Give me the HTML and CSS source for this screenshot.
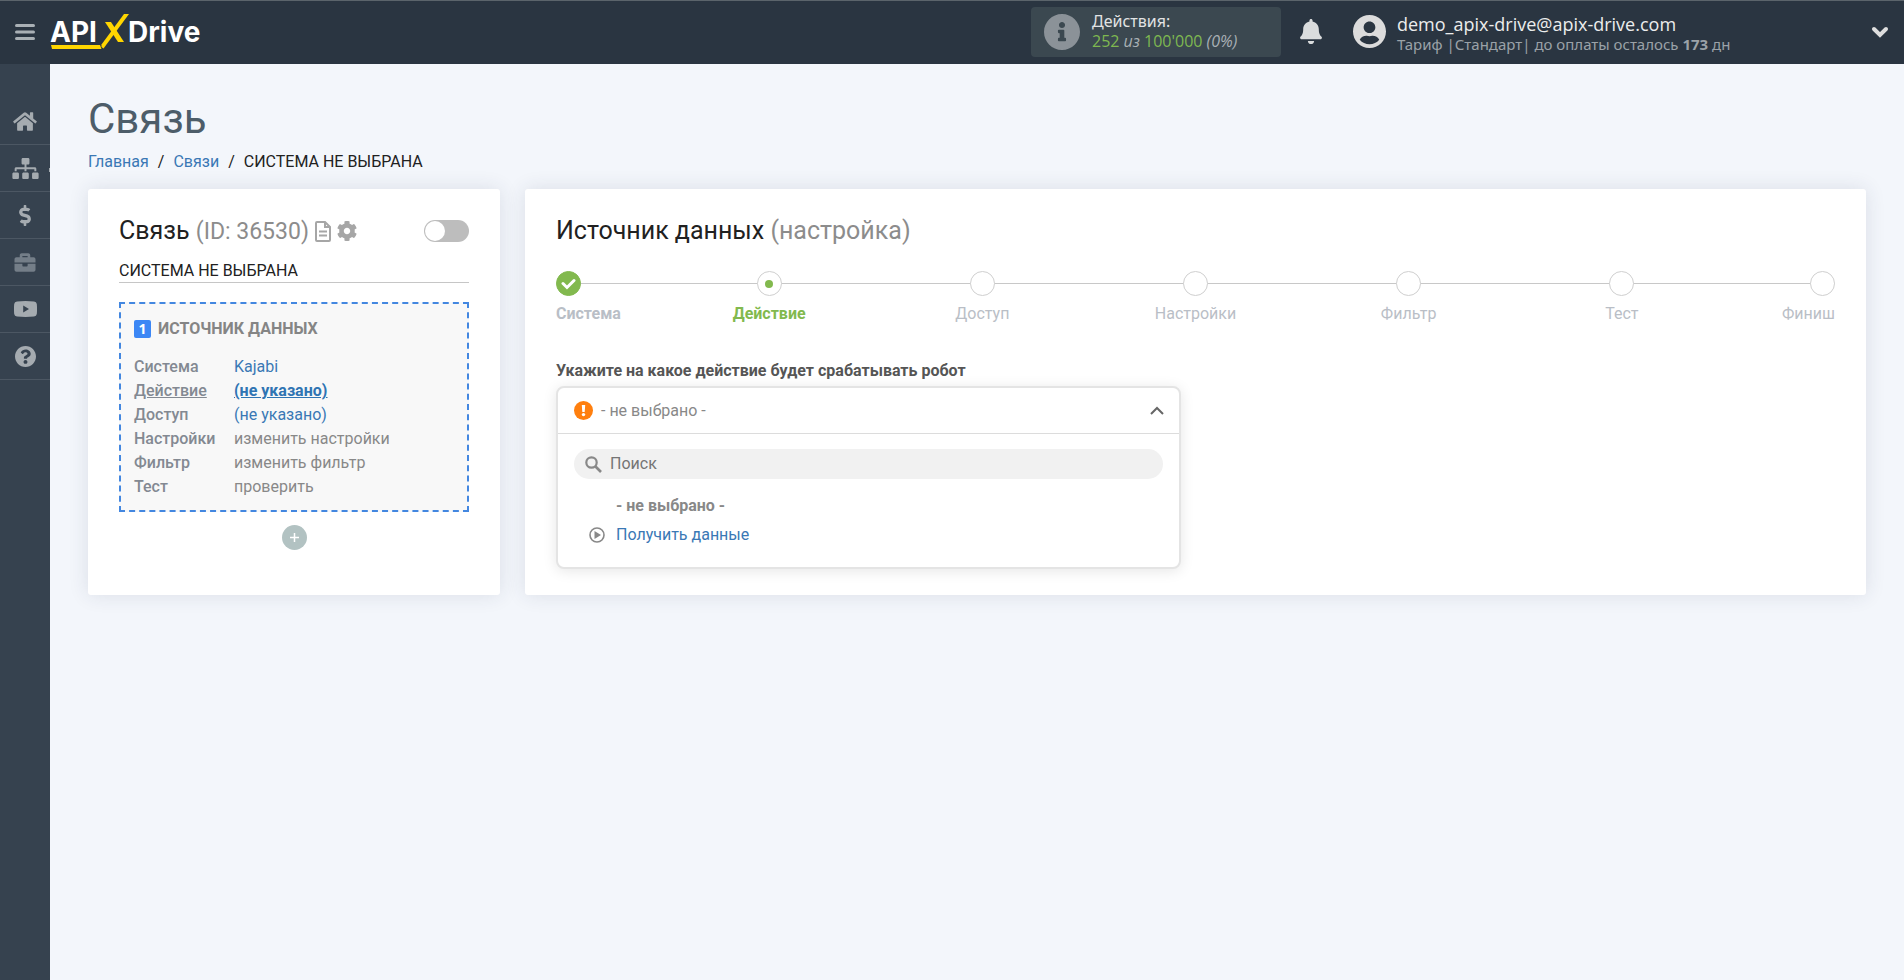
FILE: index.html
```html
<!DOCTYPE html>
<html lang="ru">
<head>
<meta charset="utf-8">
<meta name="viewport" content="width=device-width, initial-scale=1">
<title>Связь</title>
<link rel="stylesheet" href="styles.css">
</head>
<body>
<header class="topbar">
  <button class="icon-button menu-button" type="button" aria-label="Меню">
    <svg width="20" height="18" viewBox="0 0 20 18"><path d="M1.500 2.500h17M1.500 9h17M1.500 15.500h17" stroke="#a9b0b5" stroke-width="3" stroke-linecap="round"/></svg>
  </button>
  <a class="logo" href="#" aria-label="APIXDrive">
    <span class="logo-api">API</span>
    <svg class="logo-x" width="79" height="36" viewBox="0 0 79 36"><path d="M1 31H50L51.500 35H2z" fill="#ffd600"/><path d="M55 8h6l13 20h-6z" fill="#ffd600"/><path d="M74 0h5L53.500 34.500l-2-1.500v-2.500z" fill="#ffd600"/></svg>
    <span class="logo-drive">Drive</span>
  </a>
  <div class="usage">
    <svg class="usage-icon" width="36" height="36" viewBox="8 8 496 496"><path d="M256 8C119.043 8 8 119.083 8 256c0 136.997 111.043 248 248 248s248-110.997 248-248C504 119.083 392.957 8 256 8zm0 110c23.196 0 42 18.804 42 42s-18.804 42-42 42-42-18.804-42-42 18.804-42 42-42zm56 254c0 6.627-5.373 12-12 12h-88c-6.627 0-12-5.373-12-12v-24c0-6.627 5.373-12 12-12h12v-64h-12c-6.627 0-12-5.373-12-12v-24c0-6.627 5.373-12 12-12h64c6.627 0 12 5.373 12 12v100h12c6.627 0 12 5.373 12 12v24z" fill="#8b9298"/></svg>
    <div class="usage-text">
      <div>Действия:</div>
      <div class="usage-count"><span class="green">252</span> <i>из</i> <span class="green">100'000</span> <i>(0%)</i></div>
    </div>
  </div>
  <button class="icon-button bell" type="button" aria-label="Уведомления">
    <svg width="22" height="25" viewBox="0 0 448 512"><path d="M224 512c35.320 0 63.970-28.650 63.970-64H160.030c0 35.350 28.650 64 63.970 64zm215.390-149.710c-19.320-20.760-55.470-51.990-55.470-154.290 0-77.700-54.480-139.900-127.940-155.160V32c0-17.670-14.320-32-31.980-32s-31.980 14.330-31.980 32v20.840C118.560 68.100 64.080 130.300 64.080 208c0 102.300-36.150 133.530-55.470 154.290-6 6.450-8.660 14.160-8.610 21.710.11 16.400 12.980 32 32.100 32h383.800c19.120 0 32-15.600 32.100-32 .05-7.550-2.610-15.270-8.610-21.710z" fill="#dadcdd"/></svg>
  </button>
  <button class="account" type="button">
    <svg class="avatar" width="33" height="33" viewBox="0 8 496 496"><path d="M248 8C111 8 0 119 0 256s111 248 248 248 248-111 248-248S385 8 248 8zm0 96c48.600 0 88 39.400 88 88s-39.400 88-88 88-88-39.400-88-88 39.400-88 88-88zm0 344c-58.700 0-111.300-26.600-146.500-68.200 18.800-35.400 55.600-59.800 98.500-59.800 2.400 0 4.800.4 7.100 1.100 13 4.200 26.600 6.900 40.900 6.900 14.300 0 28-2.700 40.900-6.900 2.300-.7 4.700-1.100 7.100-1.100 42.900 0 79.700 24.400 98.500 59.800C359.300 421.400 306.700 448 248 448z" fill="#dcdcdc"/></svg>
    <span class="account-text">
      <span class="account-mail">demo_apix-drive@apix-drive.com</span>
      <span class="account-plan">Тариф |Стандарт| до оплаты осталось <b>173</b> дн</span>
    </span>
    <svg class="account-caret" width="18" height="12" viewBox="0 0 18 12"><path d="M3 3l6 6 6-6" fill="none" stroke="#dedede" stroke-width="4" stroke-linecap="round"/></svg>
  </button>
</header>

<div class="shell">
  <nav class="sidebar" aria-label="Разделы">
    <a class="side-link" href="#" aria-label="Главная"><svg width="24" height="21" viewBox="0 0 576 512"><path d="M280.370 148.260L96 300.110V464a16 16 0 0 0 16 16l112.060-.29a16 16 0 0 0 15.920-16V368a16 16 0 0 1 16-16h64a16 16 0 0 1 16 16v95.640a16 16 0 0 0 16 16.050L464 480a16 16 0 0 0 16-16V300L295.670 148.260a12.190 12.190 0 0 0-15.300 0zM571.600 251.470L488 182.560V44.050a12 12 0 0 0-12-12h-56a12 12 0 0 0-12 12v72.610L318.470 43a48 48 0 0 0-61 0L4.340 251.470a12 12 0 0 0-1.600 16.900l25.500 31A12 12 0 0 0 45.150 301l235.220-193.740a12.190 12.190 0 0 1 15.300 0L530.900 301a12 12 0 0 0 16.900-1.600l25.500-31a12 12 0 0 0-1.700-16.930z"/></svg></a>
    <a class="side-link side-current" href="#" aria-label="Связи"><svg width="27" height="21" viewBox="0 0 640 512"><path d="M128 352H32c-17.670 0-32 14.330-32 32v96c0 17.670 14.330 32 32 32h96c17.670 0 32-14.330 32-32v-96c0-17.670-14.330-32-32-32zm-24-80h192v48h48v-48h192v48h48v-57.590c0-21.170-17.230-38.410-38.410-38.410H344v-64h40c17.670 0 32-14.330 32-32V32c0-17.670-14.330-32-32-32H256c-17.670 0-32 14.330-32 32v96c0 17.670 14.330 32 32 32h40v64H94.410C73.230 224 56 241.230 56 262.410V320h48v-48zm264 80h-96c-17.670 0-32 14.330-32 32v96c0 17.670 14.330 32 32 32h96c17.670 0 32-14.330 32-32v-96c0-17.670-14.330-32-32-32zm240 0h-96c-17.670 0-32 14.330-32 32v96c0 17.670 14.330 32 32 32h96c17.670 0 32-14.330 32-32v-96c0-17.670-14.330-32-32-32z"/></svg></a>
    <a class="side-link" href="#" aria-label="Оплата"><svg width="12" height="21" viewBox="0 0 288 512"><path d="M209.200 233.400l-108-31.600C88.700 198.200 80 186.500 80 173.500c0-16.300 13.200-29.500 29.500-29.500h66.300c12.200 0 24.200 3.700 34.200 10.500 6.100 4.100 14.300 3.100 19.500-2l34.800-34c7.100-6.900 6.100-18.400-1.800-24.500C238 74.800 207.400 64.100 176 64V16c0-8.800-7.200-16-16-16h-32c-8.800 0-16 7.200-16 16v48h-2.500C45.800 64-5.400 118.700.5 183.600c4.200 46.100 39.400 83.600 83.800 96.600l102.500 30c12.500 3.700 21.200 15.300 21.200 28.300 0 16.300-13.200 29.500-29.500 29.500h-66.300C100 368 88 364.300 78 357.500c-6.100-4.100-14.300-3.100-19.500 2l-34.800 34c-7.100 6.900-6.100 18.400 1.800 24.500 24.500 19.200 55.100 29.900 86.500 30v48c0 8.800 7.200 16 16 16h32c8.800 0 16-7.200 16-16v-48.200c46.600-.9 90.300-28.600 105.700-72.700 21.500-61.600-14.600-124.800-72.500-141.700z"/></svg></a>
    <a class="side-link side-dim" href="#" aria-label="Проекты"><svg width="22" height="21" viewBox="0 0 512 512"><path d="M320 336c0 8.840-7.160 16-16 16h-96c-8.840 0-16-7.160-16-16v-48H0v144c0 25.600 22.400 48 48 48h416c25.600 0 48-22.400 48-48V288H320v48zm144-208h-80V80c0-25.600-22.400-48-48-48H176c-25.600 0-48 22.400-48 48v48H48c-25.600 0-48 22.400-48 48v80h512v-80c0-25.600-22.400-48-48-48zm-144 0H192V96h128v32z"/></svg></a>
    <a class="side-link" href="#" aria-label="Видео"><svg width="23" height="16" viewBox="0 0 23 16"><path fill-rule="evenodd" d="M3 .4Q11.500-.4 20 .4q2.500.2 2.800 2.600.5 5 0 10-.3 2.400-2.800 2.600-8.500.8-17 0Q.5 15.400.2 13q-.5-5 0-10Q.5.6 3 .4zM9.200 4.600v6.800L15 8z"/></svg></a>
    <a class="side-link" href="#" aria-label="Помощь"><svg width="21" height="21" viewBox="8 8 496 496"><path d="M504 256c0 136.997-111.043 248-248 248S8 392.997 8 256C8 119.083 119.043 8 256 8s248 111.083 248 248zM262.655 90c-54.497 0-89.255 22.957-116.549 63.758-3.536 5.286-2.353 12.415 2.715 16.258l34.699 26.310c5.205 3.947 12.621 3.008 16.665-2.122 17.864-22.658 30.113-35.797 57.303-35.797 20.429 0 45.698 13.148 45.698 32.958 0 14.976-12.363 22.667-32.534 33.976C247.128 238.528 216 254.941 216 296v4c0 6.627 5.373 12 12 12h56c6.627 0 12-5.373 12-12v-1.333c0-28.462 83.186-29.647 83.186-106.667 0-58.002-60.165-102-116.531-102zM256 338c-25.365 0-46 20.635-46 46 0 25.364 20.635 46 46 46s46-20.636 46-46c0-25.365-20.635-46-46-46z"/></svg></a>
  </nav>

  <main class="page">
    <h1 class="page-title">Связь</h1>
    <nav class="crumbs" aria-label="Путь">
      <a href="#">Главная</a><span>/</span><a href="#">Связи</a><span>/</span><span>СИСТЕМА НЕ ВЫБРАНА</span>
    </nav>

    <div class="columns">
      <section class="card">
        <div class="card-head">
          <h2 class="card-title">Связь <span class="muted link-id">(ID: 36530)</span></h2>
          <button class="icon-button" type="button" aria-label="Журнал"><svg width="16" height="21" viewBox="0 0 16 21"><path d="M2 1h8l5 5v13q0 1-1 1H2q-1 0-1-1V2q0-1 1-1zM10 1v5h5" fill="none" stroke="#a6a6a6" stroke-width="2"/><path d="M4 10.500h8M4 14.500h8" stroke="#a6a6a6" stroke-width="2"/></svg></button>
          <button class="icon-button gear" type="button" aria-label="Настройки связи"><svg width="20" height="20" viewBox="8 8 496 496"><path d="M487.400 315.700l-42.600-24.600c4.300-23.200 4.300-47 0-70.200l42.600-24.600c4.900-2.800 7.100-8.600 5.500-14-11.100-35.600-30-67.800-54.700-94.600-3.800-4.100-10-5.100-14.800-2.300L380.800 110c-17.900-15.400-38.500-27.300-60.800-35.100V25.800c0-5.600-3.900-10.500-9.400-11.700-36.700-8.200-74.300-7.800-109.200 0-5.500 1.200-9.400 6.100-9.400 11.700V75c-22.200 7.900-42.800 19.800-60.800 35.100L88.700 85.500c-4.900-2.800-11-1.900-14.800 2.300-24.700 26.700-43.600 58.900-54.700 94.600-1.700 5.400.6 11.200 5.500 14L67.300 221c-4.300 23.200-4.300 47 0 70.200l-42.600 24.600c-4.900 2.800-7.100 8.600-5.500 14 11.100 35.600 30 67.800 54.700 94.600 3.800 4.100 10 5.100 14.800 2.300l42.600-24.600c17.900 15.400 38.500 27.300 60.800 35.100v49.200c0 5.600 3.900 10.500 9.400 11.700 36.700 8.200 74.300 7.800 109.200 0 5.500-1.200 9.400-6.100 9.400-11.700v-49.200c22.200-7.900 42.800-19.800 60.800-35.100l42.600 24.600c4.900 2.800 11 1.900 14.800-2.300 24.700-26.700 43.600-58.900 54.700-94.600 1.500-5.500-.7-11.300-5.600-14.100zM256 336c-44.100 0-80-35.900-80-80s35.900-80 80-80 80 35.900 80 80-35.900 80-80 80z" fill="#a6a6a6"/></svg></button>
          <input class="switch" type="checkbox" role="switch" aria-label="Включить связь">
        </div>
        <div class="link-name">СИСТЕМА НЕ ВЫБРАНА</div>
        <div class="source">
          <h3 class="source-title"><span class="source-number">1</span>ИСТОЧНИК ДАННЫХ</h3>
          <dl class="source-list">
            <dt>Система</dt><dd><a href="#">Kajabi</a></dd>
            <dt class="current">Действие</dt><dd class="current"><a href="#">(не указано)</a></dd>
            <dt>Доступ</dt><dd><a href="#">(не указано)</a></dd>
            <dt>Настройки</dt><dd>изменить настройки</dd>
            <dt>Фильтр</dt><dd>изменить фильтр</dd>
            <dt>Тест</dt><dd>проверить</dd>
          </dl>
        </div>
        <button class="add" type="button" aria-label="Добавить"><svg width="9" height="9" viewBox="0 0 9 9"><path d="M4.500 0v9M0 4.500h9" stroke="#fff" stroke-width="1.500"/></svg></button>
      </section>

      <section class="card">
        <div class="card-head">
          <h2 class="card-title">Источник данных <span class="muted">(настройка)</span></h2>
        </div>
        <ol class="steps">
          <li class="step step-done"><span class="dot"><svg width="15" height="12" viewBox="0 0 15 12"><path d="M2 5.500l4 4 7-7" fill="none" stroke="#fff" stroke-width="3" stroke-linecap="round"/></svg></span>Система</li>
          <li class="step step-active"><span class="dot"></span>Действие</li>
          <li class="step"><span class="dot"></span>Доступ</li>
          <li class="step"><span class="dot"></span>Настройки</li>
          <li class="step"><span class="dot"></span>Фильтр</li>
          <li class="step"><span class="dot"></span>Тест</li>
          <li class="step"><span class="dot"></span>Финиш</li>
        </ol>
        <div class="question" id="question">Укажите на какое действие будет срабатывать робот</div>
        <div class="picker">
          <button class="picker-head" type="button" aria-expanded="true" aria-describedby="question">
            <svg width="19" height="19" viewBox="0 0 19 19"><circle cx="9.500" cy="9.500" r="9.500" fill="#ff7f0e"/><path d="M7.800 4h3.400l-.5 7H8.300z" fill="#fff"/><circle cx="9.500" cy="13.600" r="1.700" fill="#fff"/></svg>
            <span>- не выбрано -</span>
            <svg class="picker-caret" width="14" height="9" viewBox="0 0 14 9"><path d="M1 8l6-6 6 6" fill="none" stroke="#666" stroke-width="2"/></svg>
          </button>
          <div class="picker-body">
            <label class="search">
              <svg width="17" height="17" viewBox="0 0 17 17"><circle cx="6.500" cy="6.500" r="5.200" fill="none" stroke="#888" stroke-width="2.200"/><path d="M10.500 10.500l5.500 5.500" stroke="#888" stroke-width="2.600"/></svg>
              <input type="text" placeholder="Поиск" aria-label="Поиск">
            </label>
            <ul class="options">
              <li><button class="option option-none" type="button">- не выбрано -</button></li>
              <li><button class="option" type="button"><svg width="16" height="16" viewBox="0 0 16 16"><circle cx="8" cy="8" r="7" fill="none" stroke="#888" stroke-width="1.600"/><path d="M5.500 4l6.500 4-6.500 4z" fill="#888"/></svg>Получить данные</button></li>
            </ul>
          </div>
        </div>
      </section>
    </div>
  </main>
</div>
</body>
</html>
```

FILE: styles.css
```css
* { box-sizing: border-box; }

body {
  margin: 0;
  min-height: 100vh;
  display: flex;
  flex-direction: column;
  background: #f3f6fb;
  color: #212121;
  font: 16px/24px Roboto, "Noto Sans", sans-serif;
}

a { color: #3a78b5; text-decoration: none; }
button { font: inherit; color: inherit; background: none; border: 0; padding: 0; cursor: pointer; }
h1, h2, h3, dl, dd, ol, ul { margin: 0; padding: 0; font-weight: 400; }
ol, ul { list-style: none; }
svg { display: block; flex: none; }

/* Top bar */
.topbar {
  height: 64px;
  padding-bottom: 2px;
  display: flex;
  align-items: center;
  background: #2a3541;
  border-top: 1px solid #5b646b;
  font-family: "Noto Sans", "Open Sans", sans-serif;
}
.icon-button { display: flex; align-items: center; justify-content: center; }
.menu-button { width: 50px; height: 61px; }
.logo {
  position: relative;
  height: 36px;
  display: flex;
  gap: 27px;
  color: #fff;
  font: 700 28px/36px Inter, sans-serif;
}
.logo-api { width: 51px; }
.logo-x { position: absolute; left: 0; top: 0; }
.usage {
  width: 250px;
  height: 50px;
  margin-left: auto;
  padding-left: 13px;
  display: flex;
  align-items: center;
  gap: 12px;
  border-radius: 4px;
  background: #3b4850;
  color: #e1e3e4;
  line-height: 20px;
}
.usage-text { padding-bottom: 2px; }
.usage-count { color: #a9b0b5; font-family: "Open Sans", sans-serif; }
.green { color: #7fb850; }
.bell { width: 60px; height: 50px; }
.account {
  width: 563px;
  display: flex;
  align-items: center;
  padding: 0 15px 0 12px;
  text-align: left;
}
.account-text {
  margin-left: 11px;
  padding-top: 4px;
  display: flex;
  flex-direction: column;
  line-height: 20px;
}
.account-mail { color: #eceded; font-family: "Open Sans", sans-serif; font-size: 18px; }
.account-plan { color: #9ba2a8; font-size: 15px; }
.account-caret { margin-left: auto; }

/* Sidebar */
.shell { flex: 1; display: flex; }
.sidebar { width: 50px; flex: none; padding-top: 34px; background: #36424f; }
.side-link {
  position: relative;
  height: 47px;
  display: flex;
  align-items: center;
  justify-content: center;
  border-bottom: 1px solid #4c5763;
  fill: #a5abb0;
}
.side-dim { fill: #747e88; }
.side-current::after {
  content: "";
  position: absolute;
  right: 0;
  top: 50%;
  width: 1px;
  height: 4px;
  background: #a5abb0;
}

/* Page */
.page { flex: 1; min-width: 0; padding: 31px 38px; }
.page-title { color: #4d5d69; font-size: 42px; line-height: 48px; }
.crumbs { display: flex; gap: 9px; margin: 7px 0 15px; }
.columns { display: grid; grid-template-columns: 412px 1fr; gap: 25px; }
.card {
  min-width: 0;
  padding: 26px 31px;
  border-radius: 3px;
  background: #fff;
  box-shadow: 0 0 20px rgba(40, 50, 80, 0.12);
}
.card-head { height: 32px; display: flex; align-items: center; gap: 6px; }
.card-title { font-size: 25px; line-height: 32px; }
.link-id { font-size: 23px; }
.muted { color: #8c8c8c; }
.switch {
  appearance: none;
  width: 45px;
  height: 22px;
  margin: 0 0 0 auto;
  padding: 1px;
  display: flex;
  border-radius: 11px;
  background: #bdbdbd;
}
.switch::before { content: ""; width: 20px; height: 20px; border-radius: 50%; background: #fff; }
.link-name { margin-top: 13px; border-bottom: 1px solid #c6c6c6; line-height: 22px; }
.source {
  margin-top: 19px;
  padding: 13px 13px 11px;
  border: 2px dashed #4387e0;
  background: #f8f8f8;
}
.source-title {
  display: flex;
  align-items: center;
  gap: 7px;
  color: #858585;
  font-size: 16px;
  line-height: 24px;
  font-weight: 700;
}
.source-number {
  width: 17px;
  height: 18px;
  border-radius: 2px;
  background: #3c87f5;
  color: #fff;
  font: 700 14px/18px "Noto Sans", sans-serif;
  text-align: center;
}
.source-list {
  margin-top: 14px;
  display: grid;
  grid-template-columns: 100px 1fr;
  color: #888;
}
.source-list dt { color: #838992; font-weight: 500; }
.source-list .current { text-decoration: underline; }
.source-list dd.current { font-weight: 700; }
.current a { color: #2f74b3; text-decoration: underline; }
.add {
  width: 25px;
  height: 25px;
  margin: 13px auto 0;
  display: flex;
  align-items: center;
  justify-content: center;
  border-radius: 50%;
  background: #b2c2c2;
}

/* Wizard steps */
.steps {
  margin-top: 24px;
  display: grid;
  grid-template-columns: 1fr repeat(5, 2fr) 1fr;
  color: #b9bec6;
}
.step {
  min-width: 0;
  display: flex;
  flex-direction: column;
  align-items: center;
  gap: 6px;
  background: linear-gradient(#c8c8c8, #c8c8c8) 0 12px / 100% 1px no-repeat;
}
.step:first-child { align-items: flex-start; }
.step:last-child { align-items: flex-end; }
.dot {
  width: 25px;
  height: 25px;
  display: flex;
  align-items: center;
  justify-content: center;
  border: 1px solid #cfcfcf;
  border-radius: 50%;
  background: #fff;
}
.step-done { font-weight: 700; }
.step-done .dot { border-color: #82b94e; background: #82b94e; }
.step-active { color: #82b94e; font-weight: 700; }
.step-active .dot::before { content: ""; width: 8px; height: 8px; border-radius: 50%; background: #82b94e; }

/* Action picker */
.question { margin-top: 33px; color: #555; font-weight: 700; }
.picker {
  max-width: 625px;
  margin-top: 3px;
  border: 2px solid #e4e4e4;
  border-radius: 8px;
  background: #fff;
  box-shadow: 0 2px 14px rgba(0, 0, 0, 0.1);
}
.picker-head {
  width: 100%;
  height: 46px;
  padding: 0 15px 0 16px;
  display: flex;
  align-items: center;
  gap: 8px;
  border-bottom: 1px solid #dcdcdc;
  color: #888;
}
.picker-caret { margin-left: auto; }
.picker-body { padding: 15px 16px 18px; }
.search {
  height: 30px;
  padding: 0 11px;
  display: flex;
  align-items: center;
  gap: 8px;
  border-radius: 15px;
  background: #f1f1f1;
}
.search input { flex: 1; min-width: 0; border: 0; padding: 0; outline: 0; background: none; font: inherit; }
.search input::placeholder { color: #757575; opacity: 1; }
.options { margin-top: 12px; }
.option {
  width: 100%;
  height: 29px;
  padding-left: 15px;
  display: flex;
  align-items: center;
  gap: 11px;
  color: #3a78b5;
}
.option-none { padding-left: 42px; color: #888; font-weight: 700; }
```
